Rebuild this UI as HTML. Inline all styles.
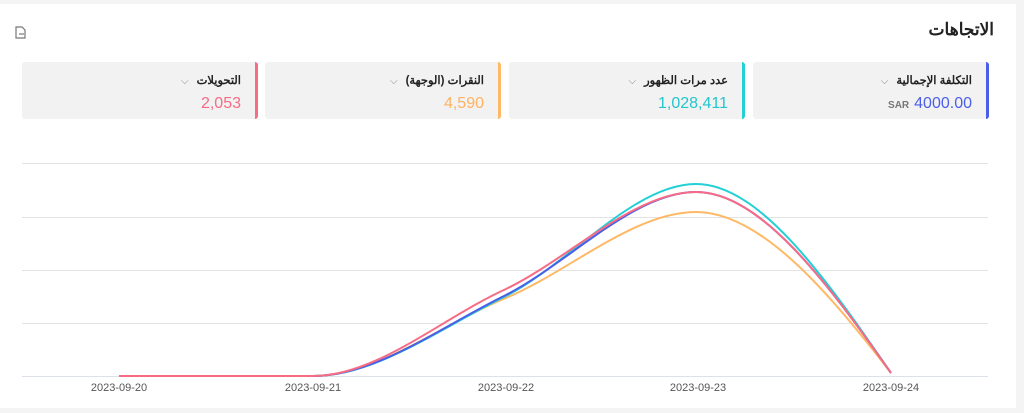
<!DOCTYPE html>
<html><head><meta charset="utf-8"><style>
body{margin:0;width:1024px;height:413px;background:#f4f4f4;font-family:"Liberation Sans","Noto Sans CJK SC",sans-serif;overflow:hidden;position:relative}
.card{position:absolute;left:0;top:4px;width:1016px;height:404px;background:#fff}
.title{position:absolute;right:30px;top:20px;font-size:17px;color:#222;direction:rtl;font-weight:bold}
.kpi{position:absolute;top:62px;height:57px;width:233px;background:#f2f2f2;border-right:3px solid;border-radius:3px;direction:rtl;box-sizing:border-box}
.kpi .l{position:absolute;right:14px;top:11px;font-size:11.5px;color:#222;font-weight:bold}
.kpi .l span{color:#888;font-size:10px;margin-right:8px;font-weight:normal}
.kpi .v{position:absolute;right:14px;top:33px;font-size:16px;direction:ltr}
.kpi .v small{font-size:10px;color:#777;font-weight:bold;margin-right:5px}
.x{position:absolute;top:382px;font-size:11px;color:#555;transform:translateX(-50%)}
</style></head><body>
<div class="card"></div>
<div class="title">الاتجاهات</div>
<svg style="position:absolute;left:14px;top:26px" width="14" height="14" viewBox="0 0 14 14"><path d="M2 1h6l3 3v8H2z" fill="none" stroke="#777" stroke-width="1.2"/><path d="M5 8h5" stroke="#777" stroke-width="1.2"/></svg>
<div class="kpi" style="left:753px;width:236px;border-color:#4a5ee8"><div class="l">التكلفة الإجمالية<span>⌵</span></div><div class="v" style="color:#4a5ee8"><small>SAR</small>4000.00</div></div>
<div class="kpi" style="left:509px;width:236px;border-color:#22d0d6"><div class="l">عدد مرات الظهور<span>⌵</span></div><div class="v" style="color:#22c6cc">1,028,411</div></div>
<div class="kpi" style="left:265px;width:236px;border-color:#ffb966"><div class="l">النقرات (الوجهة)<span>⌵</span></div><div class="v" style="color:#ffb260">4,590</div></div>
<div class="kpi" style="left:22px;width:236px;border-color:#f76b85"><div class="l">التحويلات<span>⌵</span></div><div class="v" style="color:#f76b85">2,053</div></div>
<svg style="position:absolute;left:0;top:0" width="1024" height="413">
<g stroke="#e3e3e3" stroke-width="1"><line x1="22" x2="988" y1="163.5" y2="163.5"/><line x1="22" x2="988" y1="217.5" y2="217.5"/><line x1="22" x2="988" y1="270.5" y2="270.5"/><line x1="22" x2="988" y1="323.5" y2="323.5"/><line x1="22" x2="988" y1="376.5" y2="376.5" stroke="#dde2ea"/></g>
<g fill="none" stroke-width="2">
<path stroke="#ffb966" d="M119 376L313 376C377 376 442 324 506 298C570 271 634 212 696 212C760 212 827 290 891 373"/>
<path stroke="#22d0d6" d="M119 376L313 376C377 376 442 327 506 296C570 263 634 184 696 184C760 184 827 280 891 373"/>
<path stroke="#4a5ee8" d="M119 376L313 376C377 376 442 326 506 295C570 262 634 192 696 192C760 192 827 282 891 373"/>
<path stroke="#f76b85" d="M119 376L313 376C377 376 442 318 506 289C570 258 634 192 696 192C760 192 827 282 891 373"/>
</g></svg>
<div class="x" style="left:119px">2023-09-20</div>
<div class="x" style="left:313px">2023-09-21</div>
<div class="x" style="left:506px">2023-09-22</div>
<div class="x" style="left:698px">2023-09-23</div>
<div class="x" style="left:891px">2023-09-24</div>
</body></html>
